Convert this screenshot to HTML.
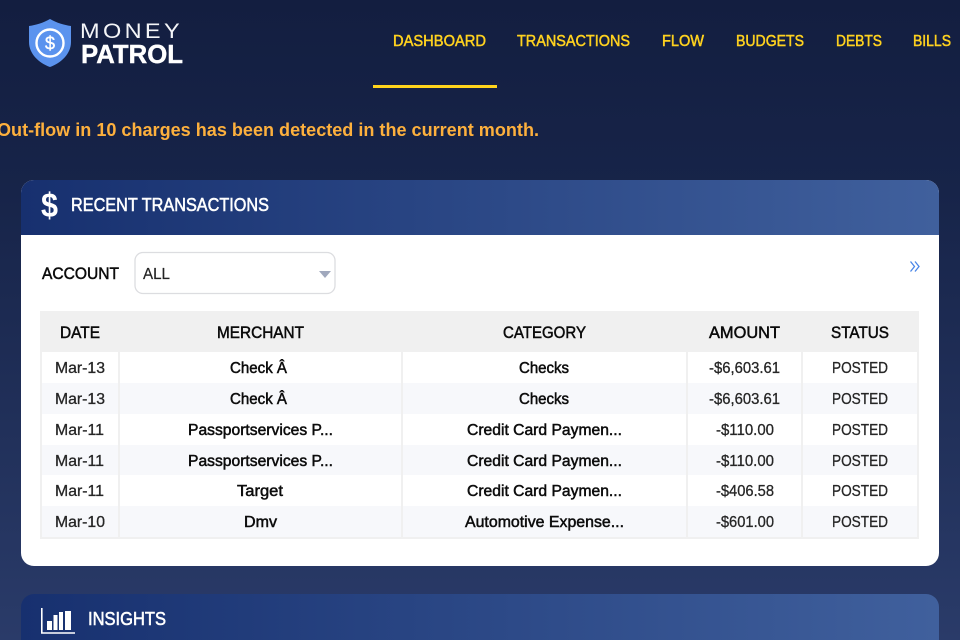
<!DOCTYPE html>
<html><head><meta charset="utf-8"><title>Money Patrol</title>
<style>
html,body{margin:0;padding:0;width:960px;height:640px;overflow:hidden;background:#141f42}
svg{display:block}
text{font-family:"Liberation Sans",sans-serif;}
.nav{font-size:15.500px;fill:#ffd21f;stroke:#ffd21f;stroke-width:.5}
.th{font-size:16.500px;fill:#0b0b0b;stroke:#0b0b0b;stroke-width:.5}
.d{font-size:15.500px;fill:#262626;stroke:#262626;stroke-width:.3}
.m{font-size:15.500px;fill:#0c0c0c;stroke:#0c0c0c;stroke-width:.5}
.w{font-size:18.500px;fill:#fff;stroke:#fff;stroke-width:.55}
</style></head><body>
<svg width="960" height="640" viewBox="0 0 960 640" xmlns="http://www.w3.org/2000/svg">
<defs>
<linearGradient id="bg" x1="0" y1="0" x2="0" y2="1"><stop offset="0" stop-color="#131e40"/><stop offset=".3" stop-color="#172449"/><stop offset="1" stop-color="#2a3b69"/></linearGradient>
<linearGradient id="hd" x1="0" y1="0" x2="1" y2="0"><stop offset="0" stop-color="#17306f"/><stop offset="1" stop-color="#40609d"/></linearGradient>
</defs>
<rect width="960" height="640" fill="url(#bg)"/>

<path d="M50 19 C57 23 64 25 71 26 V42 C71 54 61 63 50 67 C39 63 29 54 29 42 V26 C36 25 43 23 50 19Z" fill="#5b93ee"/>
<circle cx="50" cy="43" r="13.500" fill="none" stroke="#fff" stroke-width="2.400"/>
<text x="50" y="49.500" text-anchor="middle" fill="#fff" style="font-size:18px;stroke:#fff;stroke-width:.4">$</text>
<text x="80" y="38" fill="#f4f5f8" textLength="103" lengthAdjust="spacingAndGlyphs" style="font-size:21px;letter-spacing:3px">MONEY</text>
<text x="81" y="63" font-weight="bold" fill="#fff" textLength="102" lengthAdjust="spacingAndGlyphs" style="font-size:25.500px;stroke:#fff;stroke-width:.4">PATROL</text>

<text class="nav" x="393" y="46" textLength="93" lengthAdjust="spacingAndGlyphs">DASHBOARD</text>
<text class="nav" x="517" y="46" textLength="113" lengthAdjust="spacingAndGlyphs">TRANSACTIONS</text>
<text class="nav" x="662" y="46" textLength="42" lengthAdjust="spacingAndGlyphs">FLOW</text>
<text class="nav" x="736" y="46" textLength="68" lengthAdjust="spacingAndGlyphs">BUDGETS</text>
<text class="nav" x="836" y="46" textLength="46" lengthAdjust="spacingAndGlyphs">DEBTS</text>
<text class="nav" x="913" y="46" textLength="38" lengthAdjust="spacingAndGlyphs">BILLS</text>
<rect x="373" y="85" width="124" height="3" fill="#ffd41c"/>

<text x="-3" y="136" font-weight="bold" fill="#fdb03d" textLength="542" lengthAdjust="spacingAndGlyphs" style="font-size:18px">Out-flow in 10 charges has been detected in the current month.</text>

<rect x="21" y="180" width="918" height="386" rx="13" fill="#fff"/>
<path d="M21 235 V193 a13 13 0 0 1 13 -13 H926 a13 13 0 0 1 13 13 V235Z" fill="url(#hd)"/>
<text x="41" y="217" font-weight="bold" fill="#fff" textLength="17" lengthAdjust="spacingAndGlyphs" style="font-size:34px">$</text>
<text class="w" x="71" y="211" textLength="198" lengthAdjust="spacingAndGlyphs">RECENT TRANSACTIONS</text>

<text class="th" x="42" y="279" textLength="77" lengthAdjust="spacingAndGlyphs">ACCOUNT</text>
<rect x="135" y="252.500" width="200" height="41" rx="8" fill="#fff" stroke="#dcdde0" stroke-width="1.300"/>
<text x="143" y="279" fill="#222" textLength="27" lengthAdjust="spacingAndGlyphs" style="font-size:15.500px;stroke:#222;stroke-width:.2">ALL</text>
<path d="M319 271 H331 L325 278Z" fill="#a0a8bd"/>
<path d="M910.500 261.500 L914.500 266.500 L910.500 271.500 M915 261.500 L919 266.500 L915 271.500" fill="none" stroke="#4a86e8" stroke-width="1.300"/>

<rect x="40" y="311" width="879" height="228" fill="#f0f0f0"/>
<rect x="42" y="352" width="875" height="185" fill="#fff"/>
<rect x="42" y="383" width="875" height="31" fill="#f7f8fb"/>
<rect x="42" y="445" width="875" height="30" fill="#f7f8fb"/>
<rect x="42" y="506" width="875" height="31" fill="#f7f8fb"/>
<g fill="#f0f0f0"><rect x="118" y="352" width="2" height="186"/><rect x="401" y="352" width="2" height="186"/><rect x="686" y="352" width="2" height="186"/><rect x="801" y="352" width="2" height="186"/></g>

<text class="th" x="60" y="338" textLength="40" lengthAdjust="spacingAndGlyphs">DATE</text>
<text class="th" x="217" y="338" textLength="87" lengthAdjust="spacingAndGlyphs">MERCHANT</text>
<text class="th" x="503" y="338" textLength="83" lengthAdjust="spacingAndGlyphs">CATEGORY</text>
<text class="th" x="709" y="338" textLength="71" lengthAdjust="spacingAndGlyphs">AMOUNT</text>
<text class="th" x="831" y="338" textLength="58" lengthAdjust="spacingAndGlyphs">STATUS</text>

<text class="d" x="55" y="373" textLength="50" lengthAdjust="spacingAndGlyphs">Mar-13</text>
<text class="m" x="230" y="373" textLength="57" lengthAdjust="spacingAndGlyphs">Check Â</text>
<text class="m" x="519" y="373" textLength="50" lengthAdjust="spacingAndGlyphs">Checks</text>
<text class="d" x="709" y="373" textLength="71" lengthAdjust="spacingAndGlyphs">-$6,603.61</text>
<text class="d" x="832" y="373" textLength="56" lengthAdjust="spacingAndGlyphs">POSTED</text>

<text class="d" x="55" y="404" textLength="50" lengthAdjust="spacingAndGlyphs">Mar-13</text>
<text class="m" x="230" y="404" textLength="57" lengthAdjust="spacingAndGlyphs">Check Â</text>
<text class="m" x="519" y="404" textLength="50" lengthAdjust="spacingAndGlyphs">Checks</text>
<text class="d" x="709" y="404" textLength="71" lengthAdjust="spacingAndGlyphs">-$6,603.61</text>
<text class="d" x="832" y="404" textLength="56" lengthAdjust="spacingAndGlyphs">POSTED</text>

<text class="d" x="55" y="435" textLength="49" lengthAdjust="spacingAndGlyphs">Mar-11</text>
<text class="m" x="188" y="435" textLength="145" lengthAdjust="spacingAndGlyphs">Passportservices P...</text>
<text class="m" x="467" y="435" textLength="155" lengthAdjust="spacingAndGlyphs">Credit Card Paymen...</text>
<text class="d" x="716" y="435" textLength="58" lengthAdjust="spacingAndGlyphs">-$110.00</text>
<text class="d" x="832" y="435" textLength="56" lengthAdjust="spacingAndGlyphs">POSTED</text>

<text class="d" x="55" y="466" textLength="49" lengthAdjust="spacingAndGlyphs">Mar-11</text>
<text class="m" x="188" y="466" textLength="145" lengthAdjust="spacingAndGlyphs">Passportservices P...</text>
<text class="m" x="467" y="466" textLength="155" lengthAdjust="spacingAndGlyphs">Credit Card Paymen...</text>
<text class="d" x="716" y="466" textLength="58" lengthAdjust="spacingAndGlyphs">-$110.00</text>
<text class="d" x="832" y="466" textLength="56" lengthAdjust="spacingAndGlyphs">POSTED</text>

<text class="d" x="55" y="496" textLength="49" lengthAdjust="spacingAndGlyphs">Mar-11</text>
<text class="m" x="237" y="496" textLength="46" lengthAdjust="spacingAndGlyphs">Target</text>
<text class="m" x="467" y="496" textLength="155" lengthAdjust="spacingAndGlyphs">Credit Card Paymen...</text>
<text class="d" x="716" y="496" textLength="58" lengthAdjust="spacingAndGlyphs">-$406.58</text>
<text class="d" x="832" y="496" textLength="56" lengthAdjust="spacingAndGlyphs">POSTED</text>

<text class="d" x="55" y="527" textLength="50" lengthAdjust="spacingAndGlyphs">Mar-10</text>
<text class="m" x="244" y="527" textLength="33" lengthAdjust="spacingAndGlyphs">Dmv</text>
<text class="m" x="465" y="527" textLength="159" lengthAdjust="spacingAndGlyphs">Automotive Expense...</text>
<text class="d" x="716" y="527" textLength="58" lengthAdjust="spacingAndGlyphs">-$601.00</text>
<text class="d" x="832" y="527" textLength="56" lengthAdjust="spacingAndGlyphs">POSTED</text>

<path d="M21 640 V607 a13 13 0 0 1 13 -13 H926 a13 13 0 0 1 13 13 V640Z" fill="url(#hd)"/>
<path d="M41.800 608 V633 H75" fill="none" stroke="#fff" stroke-width="1.600"/>
<g fill="#fff"><rect x="47" y="621" width="5" height="9"/><rect x="53.500" y="615" width="4" height="15"/><rect x="59" y="612" width="4" height="18"/><rect x="65" y="611" width="6" height="19"/></g>
<text class="w" x="88" y="625" textLength="78" lengthAdjust="spacingAndGlyphs">INSIGHTS</text>
</svg>
</body></html>
